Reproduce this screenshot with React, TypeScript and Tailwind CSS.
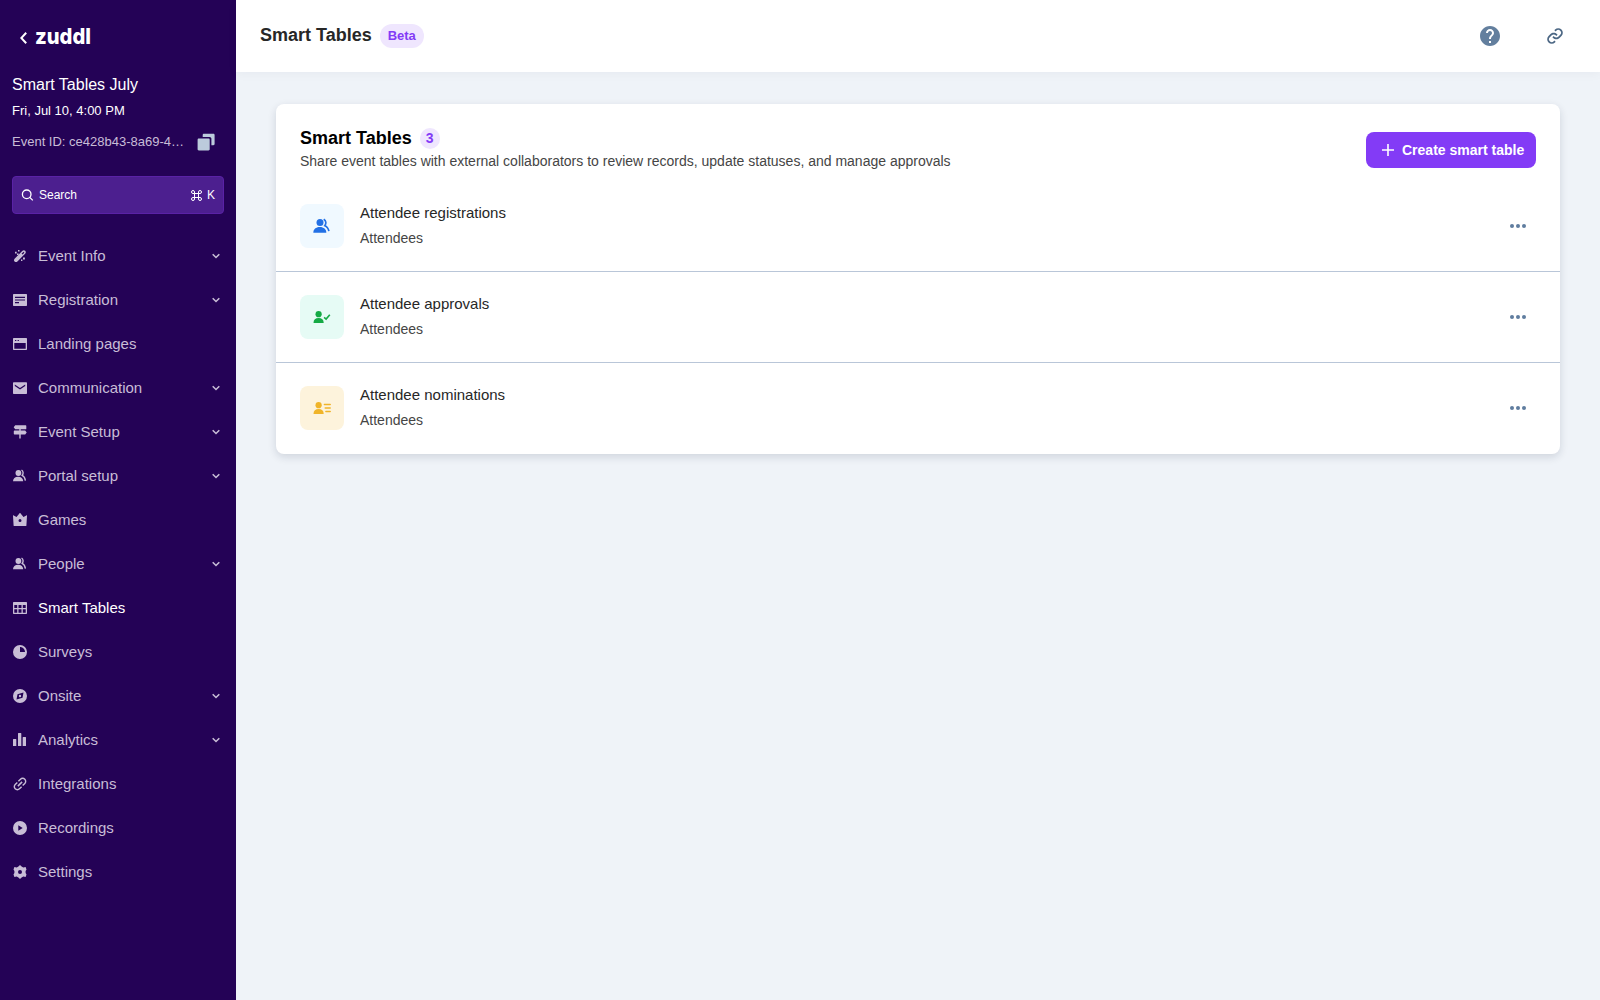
import { ReactNode } from 'react'
import { BiLink } from 'react-icons/bi'
import { MdHelp, MdLink } from 'react-icons/md'

const NAV_ICONS: Record<string, ReactNode> = {
    wand: (
        <>
            <path
                fillRule="evenodd"
                d="M2.600 10.800 10.200 3c1-1 2.200-1 3-.2s.8 2-.1 2.900l-7.700 7.800c-.8.8-2 .8-2.800 0s-.8-1.900 0-2.700zM9.600 5.700l.9.900 1.900-1.900-.9-.9z"
            />
            <path d="M3 3.800h1.700v1.700H3zM6 2h1.500v1.500H6zM5 5.500h1.600V7H5zM11 9.600h1.900v1.900H11zM9 11.500h1.400v1.400H9z" />
        </>
    ),
    article: (
        <path
            fillRule="evenodd"
            d="M1.700 2h12.600c.4 0 .7.3.7.7v10.600c0 .4-.3.7-.7.7H1.700a.7.7 0 0 1-.7-.7V2.700c0-.4.3-.7.7-.7zM3 4.700v1.200h10V4.700zM3 7.400v1.200h10V7.400zM3 10.100v1.200h4v-1.200z"
        />
    ),
    window: (
        <path
            fillRule="evenodd"
            d="M1.700 2h12.600c.4 0 .7.3.7.7v10.600c0 .4-.3.7-.7.7H1.700a.7.7 0 0 1-.7-.7V2.700c0-.4.3-.7.7-.7zM2.300 7v5.700h11.400V7zM3 4v1.100h1.300V4zM5.600 4v1.100h1.300V4z"
        />
    ),
    mail: (
        <path
            fillRule="evenodd"
            d="M1.700 2.300h12.600c.4 0 .7.3.7.7v10.300c0 .4-.3.7-.7.7H1.700a.7.7 0 0 1-.7-.7V3c0-.4.3-.7.7-.7zM2.800 4.600v1.300L8 9.500l5.200-3.600V4.600L8 8.100z"
        />
    ),
    signpost: (
        <path d="M3.200 1.300h10.500c.4 0 .6.3.6.600v2.800c0 .3-.2.600-.6.600H8.700v1.200h4.500l1.500 1.900-1.500 2H8.700v4.200H7.300v-4.200H2.500a.7.7 0 0 1-.7-.7V7.200c0-.4.3-.7.7-.7h4.800V5.300H3.200l-1.500-2z" />
    ),
    users: (
        <>
            <circle cx="6.400" cy="5" r="2.900" />
            <path d="M1 13.300c0-2.900 2-4.600 5.100-4.600s5.100 1.700 5.100 4.600z" />
            <path
                d="M9.500 2c1.900 1.100 2.100 3.700.7 5.300 1.800.9 2.900 2.500 3.200 5.300"
                fill="none"
                stroke="currentColor"
                strokeWidth="1.400"
            />
        </>
    ),
    crown: (
        <path
            fillRule="evenodd"
            d="M1 3.700c0-.4.400-.5.700-.2L4.500 4.900 7.400 1.400c.3-.4.900-.4 1.200 0l2.900 3.500 2.800-1.400c.3-.3.700-.2.700.2L14.400 13.400c0 .4-.3.600-.7.600H2.300c-.4 0-.7-.2-.7-.6zM8 7.100a1.500 1.500 0 1 0 0 3 1.500 1.500 0 0 0 0-3z"
        />
    ),
    table: (
        <path
            fillRule="evenodd"
            d="M1.700 2h12.600c.4 0 .7.3.7.7v10.600c0 .4-.3.7-.7.7H1.700a.7.7 0 0 1-.7-.7V2.700c0-.4.3-.7.7-.7zM2.300 5v3h2.900V5zM6.500 5v3h3V5zM10.800 5v3h2.900V5zM2.300 9.200v3.500h2.900V9.200zM6.500 9.200v3.500h3V9.200zM10.800 9.200v3.500h2.900V9.200z"
        />
    ),
    pie: (
        <path fillRule="evenodd" d="M8 1a7 7 0 1 0 0 14A7 7 0 0 0 8 1zM8 3c2.800 0 5 2.200 5 5H8z" />
    ),
    compass: (
        <path
            fillRule="evenodd"
            d="M8 1a7 7 0 1 0 0 14A7 7 0 0 0 8 1zM11.500 4.500 10.500 9.800l-6 1.700 1-5.300zM8 6.800a1.200 1.200 0 1 0 0 2.400 1.200 1.200 0 0 0 0-2.400z"
        />
    ),
    bars: (
        <path d="M1.500 7h2.300c.3 0 .5.2.5.500V14H1V7.500c0-.3.200-.5.500-.5zM6.500 1h2.300c.3 0 .5.200.5.500V14H6V1.500c0-.3.200-.5.500-.5zM11.200 5h2.300c.3 0 .5.200.5.500V14h-3.300V5.500c0-.3.200-.5.500-.5z" />
    ),
    play: (
        <path fillRule="evenodd" d="M8 1a7 7 0 1 0 0 14A7 7 0 0 0 8 1zM6.300 5.200 10.700 8 6.300 10.800z" />
    ),
    gear: (
        <path
            fillRule="evenodd"
            d="M6.400 2.500 8 1l1.600 1.500 1.700.9 2.300-.4.900 2.400-.9 1.500v2.200l.9 1.500-.9 2.400-2.300-.4-1.700.9L8 15l-1.600-1.500-1.700-.9-2.300.4-.9-2.400.9-1.500V6.900l-.9-1.500.9-2.400 2.300.4zM8 6a2 2 0 1 0 0 4 2 2 0 0 0 0-4z"
        />
    ),
}

const NAV_ITEMS = [
    { label: 'Event Info', icon: 'wand', expandable: true },
    { label: 'Registration', icon: 'article', expandable: true },
    { label: 'Landing pages', icon: 'window' },
    { label: 'Communication', icon: 'mail', expandable: true },
    { label: 'Event Setup', icon: 'signpost', expandable: true },
    { label: 'Portal setup', icon: 'users', expandable: true },
    { label: 'Games', icon: 'crown' },
    { label: 'People', icon: 'users', expandable: true },
    { label: 'Smart Tables', icon: 'table', active: true },
    { label: 'Surveys', icon: 'pie' },
    { label: 'Onsite', icon: 'compass', expandable: true },
    { label: 'Analytics', icon: 'bars', expandable: true },
    { label: 'Integrations', icon: 'link' },
    { label: 'Recordings', icon: 'play' },
    { label: 'Settings', icon: 'gear' },
]

const TABLES = [
    {
        name: 'Attendee registrations',
        source: 'Attendees',
        tile: 'bg-[#f0f9ff] text-[#2270e5]',
        icon: (
            <svg viewBox="0 0 20 20" className="h-5 w-5" fill="currentColor">
                <circle cx="8" cy="6.500" r="3.500" />
                <path d="M1.300 16.800c0-3.600 2.500-5.800 6.500-5.800s6.500 2.200 6.500 5.800z" />
                <path
                    d="M11.700 3.200c2.600 1.500 2.700 4.500 1.100 6.500 2.300.8 3.500 2.600 4.100 5.500"
                    fill="none"
                    stroke="currentColor"
                    strokeWidth="1.700"
                />
            </svg>
        ),
    },
    {
        name: 'Attendee approvals',
        source: 'Attendees',
        tile: 'bg-[#e6fbf5] text-[#15aa45]',
        icon: (
            <svg viewBox="0 0 20 20" className="h-5 w-5" fill="currentColor">
                <circle cx="6.600" cy="7.200" r="3.100" />
                <path d="M1.500 16c0-3.200 1.900-4.900 5.100-4.900s5.100 1.700 5.100 4.900z" />
                <path d="m12.100 10.300 2 1.800 3.700-4.400" fill="none" stroke="currentColor" strokeWidth="1.600" />
            </svg>
        ),
    },
    {
        name: 'Attendee nominations',
        source: 'Attendees',
        tile: 'bg-[#fdf3dc] text-[#f0b429]',
        icon: (
            <svg viewBox="0 0 20 20" className="h-5 w-5" fill="currentColor">
                <circle cx="6.600" cy="7.200" r="3.100" />
                <path d="M1.500 16c0-3.200 1.900-4.900 5.100-4.900s5.100 1.700 5.100 4.900z" />
                <path
                    d="M12.400 6.500h5.800M13.200 10h5M13.900 13.400h4.300"
                    stroke="currentColor"
                    strokeWidth="1.500"
                    strokeLinecap="round"
                />
            </svg>
        ),
    },
]

function Sidebar() {
    return (
        <aside className="flex h-full w-[236px] shrink-0 flex-col bg-[#240256] px-3">
            <div className="mt-6 flex h-6 items-center pl-2">
                <svg width="8" height="14" viewBox="0 0 8 14" className="mt-[3px]" fill="none" stroke="white" strokeWidth="2">
                    <path d="M6.200 1.800 1.300 7l4.900 5.200" />
                </svg>
                <svg width="64" height="32" viewBox="0 0 64 32" className="ml-[7px] overflow-visible">
                    <text
                        x="0"
                        y="24"
                        textLength="56"
                        lengthAdjust="spacingAndGlyphs"
                        className="fill-white font-['Inter',sans-serif] text-[22px] font-extrabold"
                    >
                        zuddl
                    </text>
                </svg>
            </div>

            <p className="mt-[25px] text-base leading-6 text-white">Smart Tables July</p>
            <p className="mt-1 text-[13px] leading-5 text-white">Fri, Jul 10, 4:00 PM</p>
            <div className="mt-[9px] flex h-6 items-center">
                <p className="w-[174px] text-[13px] text-[#c8bdd6]">Event ID: ce428b43-8a69-4…</p>
                <svg width="18" height="18" viewBox="0 0 18 18" className="ml-[11px]" fill="#bccbdc">
                    <path d="M1.800 5.600h9.700c.7 0 1.200.5 1.200 1.200v9.500c0 .7-.5 1.200-1.200 1.200H1.800c-.7 0-1.200-.5-1.200-1.200V6.800c0-.7.5-1.200 1.200-1.200z" />
                    <path d="M5.700 4V2c0-.7.5-1.200 1.200-1.200h9.500c.7 0 1.200.5 1.200 1.200v9.100c0 .7-.5 1.200-1.200 1.200h-2V5.800c0-1-.8-1.800-1.800-1.800z" />
                </svg>
            </div>

            <div className="mt-[22px] flex h-[38px] shrink-0 items-center rounded-[4px] border border-[#5a22a6] bg-[#4c1f8f] px-2 text-xs text-white">
                <svg
                    width="14"
                    height="14"
                    viewBox="0 0 14 14"
                    className="-mt-px"
                    fill="none"
                    stroke="currentColor"
                    strokeWidth="1.300"
                >
                    <circle cx="5.700" cy="6.300" r="4.300" />
                    <path d="m8.800 9.400 3 3" />
                </svg>
                <span className="ml-1">Search</span>
                <svg width="13" height="13" viewBox="-.5 -.5 13 13" className="ml-auto" fill="none" stroke="currentColor">
                    <path d="M4 4H2.500A1.500 1.500 0 1 1 4 2.500v7A1.500 1.500 0 1 1 2.500 8h7A1.500 1.500 0 1 1 8 9.500v-7A1.500 1.500 0 1 1 9.500 4H4" />
                </svg>
                <span className="ml-1">K</span>
            </div>

            <nav className="mt-5">
                {NAV_ITEMS.map(item => (
                    <div key={item.label} className="flex h-11 items-center text-[#c8bdd6]">
                        {item.icon === 'link' ? (
                            <MdLink size={18} className="-mx-px -rotate-45" />
                        ) : (
                            <svg width="16" height="16" viewBox="0 0 16 16" fill="currentColor">
                                {NAV_ICONS[item.icon]}
                            </svg>
                        )}
                        <span className={item.active ? 'ml-[10px] text-[15px] text-white' : 'ml-[10px] text-[15px]'}>
                            {item.label}
                        </span>
                        {item.expandable && (
                            <svg
                                width="8"
                                height="6"
                                viewBox="0 0 8 6"
                                className="ml-auto mr-1"
                                fill="none"
                                stroke="currentColor"
                                strokeWidth="1.600"
                            >
                                <path d="m.7 1.300 3.300 3.200 3.300-3.200" />
                            </svg>
                        )}
                    </div>
                ))}
            </nav>
        </aside>
    )
}

function Header() {
    return (
        <header className="flex h-[72px] shrink-0 items-center bg-white pl-6 pr-[34px] shadow-[0_2px_10px_rgba(15,30,60,0.04)]">
            <h1 className="mb-[2px] text-lg font-bold text-[#272727]">Smart Tables</h1>
            <span className="ml-2 flex h-6 w-11 items-center justify-center rounded-full bg-[#efe6fe] text-[13px] font-bold text-[#833bf6]">
                Beta
            </span>
            <MdHelp size={24} className="ml-auto text-[#637f9e]" />
            <BiLink size={22} className="ml-[42px] text-[#4c6784]" />
        </header>
    )
}

function SmartTablesCard() {
    return (
        <section className="rounded-lg bg-white shadow-[0_3px_8px_rgba(15,30,60,0.14)]">
            <div className="flex h-[77px] items-start justify-between px-6 pt-6">
                <div>
                    <div className="flex h-[21px] items-center">
                        <h2 className="mb-[2px] text-lg font-bold leading-5 text-black">Smart Tables</h2>
                        <span className="ml-2 flex h-[21px] w-5 items-center justify-center rounded-full bg-[#efe6fe] pb-px text-sm font-bold text-[#833bf6]">
                            3
                        </span>
                    </div>
                    <p className="mt-[2px] text-sm text-[#454545]">
                        Share event tables with external collaborators to review records, update statuses, and manage
                        approvals
                    </p>
                </div>
                <button className="mt-1 flex h-9 w-[170px] items-center rounded-lg bg-[#833bf6] pl-4 text-sm font-bold text-white">
                    <svg width="12" height="12" viewBox="0 0 12 12" stroke="currentColor" strokeWidth="1.600">
                        <path d="M6 0v12M0 6h12" />
                    </svg>
                    <span className="ml-2">Create smart table</span>
                </button>
            </div>
            {TABLES.map(table => (
                <div
                    key={table.name}
                    className="flex h-[91px] items-start border-b border-[#b9c6d8] px-6 pt-[23px] last:border-transparent"
                >
                    <div className={`flex h-11 w-11 items-center justify-center rounded-lg ${table.tile}`}>
                        {table.icon}
                    </div>
                    <div className="ml-4">
                        <p className="-mt-[2px] text-[15px] leading-[22px] text-[#272727]">{table.name}</p>
                        <p className="mt-1 text-sm leading-5 text-[#454545]">{table.source}</p>
                    </div>
                    <svg width="16" height="4" viewBox="0 0 16 4" className="ml-auto mr-[10px] mt-5" fill="#5f7d9f">
                        <circle cx="2" cy="2" r="2" />
                        <circle cx="8" cy="2" r="2" />
                        <circle cx="14" cy="2" r="2" />
                    </svg>
                </div>
            ))}
        </section>
    )
}

export default function App() {
    return (
        <div className="flex h-screen w-full overflow-hidden bg-[#eff3f8] font-['Liberation_Sans',Arial,sans-serif]">
            <Sidebar />
            <div className="flex min-w-0 flex-1 flex-col">
                <Header />
                <main className="px-10 pt-8">
                    <SmartTablesCard />
                </main>
            </div>
        </div>
    )
}
